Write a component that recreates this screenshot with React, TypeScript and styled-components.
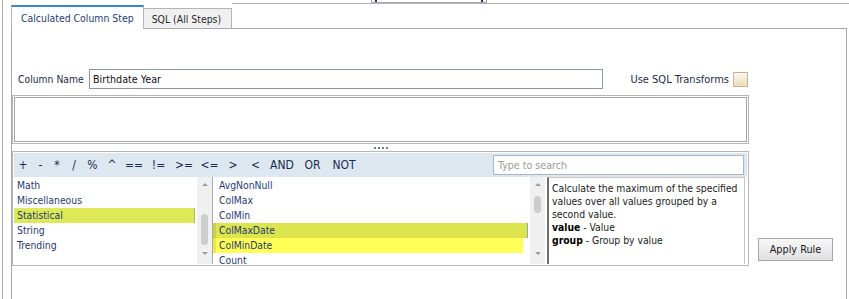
import React from "react";
import styled, { createGlobalStyle } from "styled-components";

const FONT = `"DejaVu Sans Condensed", "Liberation Sans", Arial, sans-serif`;

const GlobalStyle = createGlobalStyle`
  html, body {
    margin: 0;
    padding: 0;
    background: #ffffff;
  }
  body {
    font-family: ${FONT};
    font-size: 10.3px;
    color: #1d2c4c;
  }
  * {
    box-sizing: border-box;
  }
`;

const Frame = styled.div`
  position: relative;
  width: 849px;
  height: 299px;
  overflow: hidden;
  padding-left: 2px;
`;

const Shell = styled.div`
  height: 100%;
  border-left: 1px solid #ababab;
  display: flex;
  flex-direction: column;
`;

// little clipped box peeking in at the top edge
const TopStub = styled.div`
  position: absolute;
  left: 371px;
  top: 0;
  width: 116px;
  height: 3px;
  border: 1px solid #a8a8a8;
  border-top: none;
  display: flex;
  justify-content: space-between;
  padding: 0 3px;

  &::before,
  &::after {
    content: "";
    width: 2px;
    height: 2px;
    background: #1c2a80;
  }
`;

const TabStrip = styled.div`
  height: 28px;
  display: flex;
  align-items: flex-end;
  padding-left: 8px;
  position: relative;
  z-index: 1;
`;

const Tab = styled.div<{ $active?: boolean }>`
  height: ${({ $active }) => ($active ? "24px" : "20px")};
  margin-bottom: ${({ $active }) => ($active ? "-1px" : "0")};
  padding: ${({ $active }) => ($active ? "0 9px" : "0 10px 0 8px")};
  display: flex;
  align-items: center;
  background: ${({ $active }) => ($active ? "#ffffff" : "#f0f0f0")};
  border: 1px solid #b4b4b4;
  border-bottom: none;
  border-top: ${({ $active }) =>
    $active ? "2px solid #3b87cf" : "1px solid #b4b4b4"};
  border-left: ${({ $active }) => ($active ? "1px solid #b4b4b4" : "none")};
  color: ${({ $active }) => ($active ? "#1f3b77" : "#2a2a2a")};
  font-size: 10.4px;
  white-space: nowrap;
`;

const StripFiller = styled.div`
  flex: 1;
  align-self: stretch;
  margin-top: 3px;
  border-top: 1px solid #b4b4b4;
`;

const TabPanel = styled.div`
  flex: 1;
  margin-left: 8px;
  margin-right: 2px;
  border: 1px solid #a9a9a9;
  border-bottom: none;
  padding-top: 40px;
`;

const MainColumn = styled.div`
  width: 737px;
`;

const NameRow = styled.div`
  height: 20px;
  display: flex;
  align-items: center;
  padding-left: 6px;
  padding-right: 1px;
`;

const FieldLabel = styled.label`
  width: 71px;
  color: #1e2a48;
  white-space: nowrap;
`;

const TextInput = styled.div`
  width: 514px;
  height: 20px;
  border: 1px solid #8795ad;
  padding-left: 3px;
  display: flex;
  align-items: center;
  color: #111;
  font-size: 10.7px;
`;

const RightLabel = styled.span`
  margin-left: auto;
  color: #1e2a48;
  font-size: 11px;
  white-space: nowrap;
`;

const CheckBox = styled.span`
  width: 15px;
  height: 15px;
  margin-left: 4px;
  border: 1px solid #c3b38e;
  background: linear-gradient(#fbf8f0 0%, #f3e9cf 55%, #eedfb6 100%);
`;

const DoubleBox = styled.div<{ $height: number }>`
  height: ${({ $height }) => $height}px;
  border: 1px solid #b7b7b7;
  padding: 1px;
  background: #ffffff;
`;

const ExprWrap = styled.div`
  margin-top: 6px;
`;

const ExprInner = styled.div`
  height: 100%;
  border: 1px solid #a5a5a5;
`;

const Splitter = styled.div`
  height: 7px;
  display: flex;
  justify-content: center;
  align-items: center;
  gap: 2px;
`;

const Dot = styled.span`
  width: 2px;
  height: 2px;
  background: #6c7c9a;
`;

const LowerRow = styled.div`
  display: flex;
  align-items: flex-end;
`;

const LowerPanel = styled(DoubleBox)`
  width: 737px;
  display: flex;
  flex-direction: column;
`;

const Toolbar = styled.div`
  height: 24px;
  background: #dce7f0;
  display: flex;
  align-items: center;
  padding-right: 3px;
`;

const Op = styled.span<{ $w: number }>`
  width: ${({ $w }) => $w}px;
  text-align: center;
  font-size: 12px;
  color: #1b2b52;
  white-space: nowrap;
`;

const Search = styled.div`
  margin-left: auto;
  width: 251px;
  height: 20px;
  border: 1px solid #a9b6c6;
  background: #ffffff;
  padding-left: 4px;
  display: flex;
  align-items: center;
  color: #9a9a9a;
  font-size: 10.6px;
`;

const ListsRow = styled.div`
  flex: 1;
  display: flex;
  overflow: hidden;
`;

const ListBox = styled.div<{ $width: number; $divider?: boolean }>`
  width: ${({ $width }) => $width}px;
  display: flex;
  border-right: ${({ $divider }) => ($divider ? "1px solid #a9a9a9" : "none")};
`;

const Items = styled.div<{ $pad: number }>`
  flex: 1;
  padding-top: 1px;
  padding-left: ${({ $pad }) => $pad}px;
`;

const Item = styled.div<{
  $bg?: string;
  $stripe?: string;
  $left?: number;
  $right?: number;
  $edge?: string;
}>`
  height: 15px;
  line-height: 15px;
  color: #1e3a74;
  white-space: nowrap;
  background: ${({ $bg }) => $bg || "transparent"};
  margin-left: ${({ $left }) => -($left || 0)}px;
  margin-right: ${({ $right }) => $right || 0}px;
  padding-left: ${({ $left }) => $left || 0}px;
  border-right: ${({ $edge }) => ($edge ? `1px solid ${$edge}` : "none")};
  box-shadow: ${({ $stripe }) => ($stripe ? `inset 3px 0 0 ${$stripe}` : "none")};
`;

const ScrollBar = styled.div`
  width: 15px;
  background: #f0f0f0;
  display: flex;
  flex-direction: column;
  align-items: center;
`;

const Arrow = styled.span<{ $down?: boolean }>`
  width: 0;
  height: 0;
  border-left: 3px solid transparent;
  border-right: 3px solid transparent;
  ${({ $down }) =>
    $down
      ? "border-top: 3px solid #9d9d9d; margin-top: auto; margin-bottom: 9px;"
      : "border-bottom: 3px solid #9d9d9d; margin-top: 6px;"}
`;

const Thumb = styled.span<{ $top: number; $size: number }>`
  width: 7px;
  height: ${({ $size }) => $size}px;
  margin-top: ${({ $top }) => $top}px;
  border-radius: 4px;
  background: #cdcdcd;
`;

const Gap = styled.div<{ $width: number }>`
  width: ${({ $width }) => $width}px;
`;

const Description = styled.div`
  width: 198px;
  border-left: 2px solid #6f6f6f;
  border-top: 1px solid #c6c6c6;
  border-right: 1px solid #c6c6c6;
  padding: 4px 0 0 3px;
  line-height: 13px;
  color: #1a1a1a;
  white-space: nowrap;
  overflow: hidden;

  b {
    color: #000;
  }
`;

const ApplyButton = styled.button`
  width: 75px;
  height: 23px;
  margin-left: 9px;
  margin-bottom: 5px;
  border: 1px solid #a7a7a7;
  background: linear-gradient(#f8f8f8, #e0e0e0);
  font-family: ${FONT};
  font-size: 10.8px;
  color: #1a1a1a;
  padding: 0;
`;

// operator buttons with the widths they take in the toolbar
const operators: [string, number][] = [
  ["+", 18],
  ["-", 17],
  ["*", 16],
  ["/", 18],
  ["%", 19],
  ["^", 20],
  ["==", 24],
  ["!=", 25],
  [">=", 26],
  ["<=", 25],
  [">", 22],
  ["<", 23],
  ["AND", 30],
  ["OR", 31],
  ["NOT", 32],
];

const App: React.FC = () => {
  return (
    <>
      <GlobalStyle />
      <Frame>
        <TopStub />
        <Shell>
          <TabStrip>
            <Tab $active>Calculated Column Step</Tab>
            <Tab>SQL (All Steps)</Tab>
            <StripFiller />
          </TabStrip>
          <TabPanel>
            <MainColumn>
              <NameRow>
                <FieldLabel>Column Name</FieldLabel>
                <TextInput>Birthdate Year</TextInput>
                <RightLabel>Use SQL Transforms</RightLabel>
                <CheckBox />
              </NameRow>
              <ExprWrap>
                <DoubleBox $height={49}>
                  <ExprInner />
                </DoubleBox>
              </ExprWrap>
              <Splitter>
                <Dot />
                <Dot />
                <Dot />
                <Dot />
              </Splitter>
            </MainColumn>
            <LowerRow>
              <LowerPanel $height={115}>
                <Toolbar>
                  {operators.map(([op, w]) => (
                    <Op key={op} $w={w}>
                      {op}
                    </Op>
                  ))}
                  <Search>Type to search</Search>
                </Toolbar>
                <ListsRow>
                  <ListBox $width={199} $divider>
                    <Items $pad={3}>
                      <Item>Math</Item>
                      <Item>Miscellaneous</Item>
                      <Item $bg="#dde956" $stripe="#c4cd38" $left={6} $right={2} $edge="#b3b46c">
                        Statistical
                      </Item>
                      <Item>String</Item>
                      <Item>Trending</Item>
                    </Items>
                    <ScrollBar>
                      <Arrow />
                      <Thumb $top={28} $size={31} />
                      <Arrow $down />
                    </ScrollBar>
                  </ListBox>
                  <ListBox $width={334}>
                    <Items $pad={6}>
                      <Item>AvgNonNull</Item>
                      <Item>ColMax</Item>
                      <Item>ColMin</Item>
                      <Item $bg="#dce54e" $stripe="#c9d23e" $left={6} $right={2} $edge="#8ea6bf">
                        ColMaxDate
                      </Item>
                      <Item $bg="#ffff55" $stripe="#eaea40" $left={6} $right={7}>
                        ColMinDate
                      </Item>
                      <Item>Count</Item>
                    </Items>
                    <ScrollBar>
                      <Arrow />
                      <Thumb $top={10} $size={17} />
                      <Arrow $down />
                    </ScrollBar>
                    <Gap $width={2} />
                  </ListBox>
                  <Description>
                    Calculate the maximum of the specified
                    <br />
                    values over all values grouped by a
                    <br />
                    second value.
                    <br />
                    <b>value</b> - Value
                    <br />
                    <b>group</b> - Group by value
                  </Description>
                </ListsRow>
              </LowerPanel>
              <ApplyButton>Apply Rule</ApplyButton>
            </LowerRow>
          </TabPanel>
        </Shell>
      </Frame>
    </>
  );
};

export default App;
